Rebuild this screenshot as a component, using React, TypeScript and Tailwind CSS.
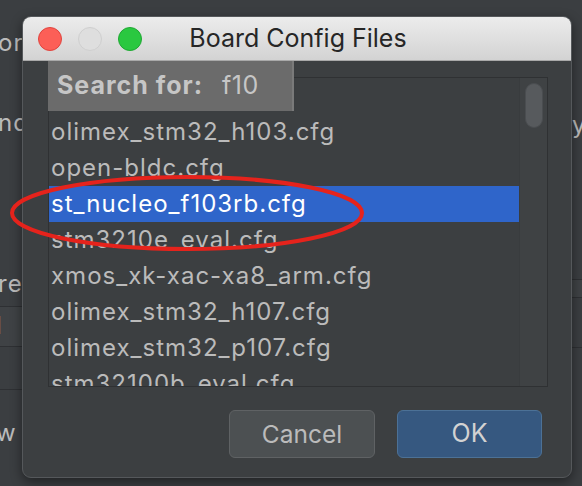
import React from "react";

const items = [
  "",
  "olimex_stm32_h103.cfg",
  "open-bldc.cfg",
  "st_nucleo_f103rb.cfg",
  "stm3210e_eval.cfg",
  "xmos_xk-xac-xa8_arm.cfg",
  "olimex_stm32_h107.cfg",
  "olimex_stm32_p107.cfg",
  "stm32100b_eval.cfg",
];

export default function App() {
  return (
    <div
      className="relative w-[582px] h-[486px] overflow-hidden bg-[#3b3e41] text-[#bbbbbb]"
      style={{ fontFamily: "Inter, 'Liberation Sans', sans-serif" }}
    >
      {/* background window */}
      <div className="flex h-full w-full justify-between text-[24px] tracking-[1px]">
        <div className="flex w-[60px] flex-col">
          <div className="h-[26px]" />
          <div className="h-[34px] leading-[34px] -ml-[2px]">or</div>
          <div className="h-[46px]" />
          <div className="h-[34px] leading-[34px] -ml-[2px]">nd</div>
          <div className="h-[127px]" />
          <div className="h-[34px] leading-[34px] -ml-[2px]">re</div>
          <div className="h-[6px] border-b border-[#2e3033]" />
          <div className="h-[40px] border-b border-[#2e3033] bg-[#3f4245] leading-[38px] -ml-[4px]">l</div>
          <div className="h-[43px] border-b border-[#2e3033]" />
          <div className="h-[26px]" />
          <div className="h-[34px] leading-[34px] -ml-[4px]">w</div>
        </div>
        <div className="flex w-[40px] flex-col">
          <div className="h-[108px]" />
          <div className="h-[34px] pl-[30px] leading-[34px]">y</div>
          <div className="h-[138px] border-b border-[#2e3033]" />
          <div className="h-[18px] border-b border-[#2e3033] bg-[#3f4245]" />
          <div className="h-[50px] border-b border-[#2e3033]" />
        </div>
      </div>

      {/* dialog */}
      <div className="absolute left-[22px] top-[16px] flex h-[462px] w-[550px] flex-col overflow-hidden rounded-[9px] border border-[#55585b] bg-[#3c3f41] shadow-[0_4px_12px_rgba(0,0,0,0.45)]">
        {/* title bar */}
        <div className="relative flex h-[44px] shrink-0 items-center border-b border-[#a9a9a9] bg-gradient-to-b from-[#ececec] to-[#d3d3d3] px-[15px]">
          <div className="flex gap-[16px]">
            <span className="h-[24px] w-[24px] rounded-full border border-[#e0443e] bg-[#fc5f57]" />
            <span className="h-[24px] w-[24px] rounded-full border border-[#cfcfcf] bg-[#dedede]" />
            <span className="h-[24px] w-[24px] rounded-full border border-[#1fa833] bg-[#2ac840]" />
          </div>
          <div className="absolute inset-0 flex items-center justify-center pl-[2px] text-[25px] text-[#262626]">
            Board Config Files
          </div>
        </div>

        {/* body */}
        <div className="relative flex flex-1 flex-col px-[25px] pt-[16px]">
          {/* list */}
          <div className="flex h-[310px] w-[500px] overflow-hidden border border-[#2f3133] bg-[#3c3f41]">
            <div className="flex w-[470px] flex-col">
              {items.map((it, i) => {
                const sel = i === 3;
                return (
                  <div
                    key={i}
                    className={
                      sel
                        ? "h-[36px] shrink-0 bg-[#2f65ca] pl-[2px] text-[24px] tracking-[1px] leading-[36px] text-white"
                        : "h-[36px] shrink-0 pl-[2px] text-[24px] tracking-[1px] leading-[36px] text-[#bbbbbb]"
                    }
                  >
                    {it}
                  </div>
                );
              })}
            </div>
            <div className="flex flex-1 justify-center border-l border-[#393c3e] bg-[#3f4244] pt-[5px]">
              <div className="h-[45px] w-[18px] rounded-full border border-[#4a4d50] bg-[#575a5d]" />
            </div>
          </div>

          {/* search popup */}
          <div className="absolute left-[25px] top-0 flex h-[50px] w-[246px] items-center border-r-2 border-[#7a7a7a] bg-[#6b6b6b] pl-[9px] text-[25px] text-[#c6c6c6]">
            <span className="font-bold tracking-[1px]">Search for:</span>
            <span className="ml-[19px] tracking-[0.5px]">f10</span>
          </div>

          {/* buttons */}
          <div className="mt-[23px] flex justify-end gap-[22px] pr-[4px]">
            <button className="h-[48px] w-[146px] rounded-[6px] border border-[#5f6264] bg-[#4c5052] text-[24.5px] text-[#bbbbbb]">
              Cancel
            </button>
            <button className="h-[48px] w-[145px] rounded-[6px] border border-[#4c7196] bg-[#365880] text-[25px] text-[#d2d2d2]">
              OK
            </button>
          </div>
        </div>
      </div>

      {/* red annotation ellipse */}
      <svg className="absolute left-0 top-0 pointer-events-none" width="582" height="486">
        <ellipse cx="187" cy="213" rx="175" ry="36" fill="none" stroke="#e5231c" strokeWidth="4" />
      </svg>
    </div>
  );
}
